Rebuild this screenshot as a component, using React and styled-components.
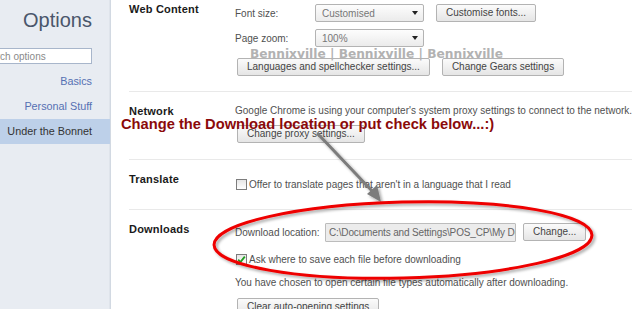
import React from "react";
import styled, { createGlobalStyle } from "styled-components";

const GlobalStyle = createGlobalStyle`
  html, body {
    margin: 0;
    padding: 0;
    width: 640px;
    height: 309px;
    overflow: hidden;
    background: #fff;
  }
  body {
    font-family: "Liberation Sans", Arial, sans-serif;
  }
  * { box-sizing: border-box; }
`;

const Page = styled.div`
  position: relative;
  display: flex;
  width: 640px;
  height: 309px;
  overflow: hidden;
  background: #fff;
`;

const Sidebar = styled.nav`
  flex: none;
  width: 111px;
  height: 100%;
  background: #e8ecf2;
  border-right: 1px solid #d2d9e2;
  box-shadow: inset -1px 0 0 #dfe4eb;
  display: flex;
  flex-direction: column;
  align-items: flex-end;
  overflow: hidden;
  padding-top: 8px;
`;

const Title = styled.h1`
  margin: 0 18px 0 0;
  font-size: 20px;
  line-height: 24px;
  font-weight: normal;
  color: #4a566b;
`;

const Search = styled.input`
  flex: none;
  margin: 16px 18px 0 0;
  width: 116px;
  height: 16px;
  border: 1px solid #a8b6cb;
  background: #fff;
  padding: 0 2px;
  font-family: "Liberation Sans", Arial, sans-serif;
  font-size: 10px;
  color: #555;
  outline: none;
  &::placeholder { color: #8a8a8a; }
`;

const NavList = styled.div`
  align-self: stretch;
  margin-top: 5px;
  display: flex;
  flex-direction: column;
`;

const NavItem = styled.div`
  height: 25px;
  line-height: 25px;
  text-align: right;
  padding-right: 18px;
  font-size: 10.8px;
  color: ${p => (p.$active ? "#333" : "#5570b3")};
  background: ${p => (p.$active ? "#bdd0e9" : "transparent")};
`;

const Main = styled.main`
  flex: 1;
  padding: 0 8px 0 18px;
  display: flex;
  flex-direction: column;
`;

const Section = styled.section`
  display: grid;
  grid-template-columns: 106px 1fr;
  padding: ${p => p.$top}px 0 ${p => p.$bottom}px;
  border-bottom: ${p => (p.$divider ? "1px solid #e9e9e9" : "none")};
`;

const Header = styled.h3`
  margin: 0;
  font-size: 11px;
  line-height: 14px;
  font-weight: bold;
  letter-spacing: 0.2px;
  color: #1a1a1a;
`;

const Content = styled.div`
  display: flex;
  flex-direction: column;
  gap: ${p => p.$gap || 7}px;
  padding-top: ${p => p.$pad || 0}px;
`;

const Row = styled.div`
  display: flex;
  align-items: center;
  gap: ${p => p.$gap || 0}px;
  height: ${p => p.$h || 18}px;
  margin-top: ${p => p.$mt || 0}px;
`;

const Label = styled.span`
  flex: none;
  width: ${p => p.$w}px;
  font-size: 10px;
  color: #505050;
  white-space: nowrap;
`;

const Text = styled.div`
  font-size: 10px;
  line-height: 14px;
  color: #505050;
  white-space: nowrap;
`;

const Select = styled.div`
  flex: none;
  width: 109px;
  height: 18px;
  border: 1px solid #b3b3b3;
  border-radius: 2px;
  background: linear-gradient(#fdfdfd, #ebebeb);
  padding: 0 5px 0 6px;
  display: flex;
  align-items: center;
  justify-content: space-between;
  font-size: 10px;
  color: #777;
`;

const Caret = styled.span`
  width: 0;
  height: 0;
  border-left: 3.5px solid transparent;
  border-right: 3.5px solid transparent;
  border-top: 4px solid #222;
`;

const Button = styled.button`
  flex: none;
  height: 18px;
  margin: 0 0 0 2px;
  padding: 0 9px;
  border: 1px solid #b3b3b3;
  border-radius: 2px;
  background: linear-gradient(#fbfbfb, #e5e5e5);
  font-family: "Liberation Sans", Arial, sans-serif;
  font-size: 10px;
  line-height: 16px;
  color: #444;
  white-space: nowrap;
`;

const PathField = styled.div`
  flex: none;
  width: 191px;
  height: 19px;
  border: 1px solid #bcbcbc;
  border-radius: 1px;
  background: #ececec;
  padding: 0 3px;
  font-size: 10px;
  letter-spacing: -0.15px;
  line-height: 17px;
  color: #666;
  white-space: nowrap;
  overflow: hidden;
`;

const CheckRow = styled.label`
  display: flex;
  align-items: center;
  height: 18px;
  margin-top: ${p => p.$mt || 0}px;
  font-size: 10px;
  color: #505050;
  white-space: nowrap;
`;

const Box = styled.span`
  flex: none;
  width: 11px;
  height: 11px;
  margin: 0 2px 0 1px;
  border: 1px solid #7d7d7d;
  background: linear-gradient(#e6e6e6, #ffffff);
  display: flex;
  align-items: center;
  justify-content: center;
`;

const Overlay = styled.svg`
  position: absolute;
  left: 0;
  top: 0;
  width: 640px;
  height: 309px;
  pointer-events: none;
`;

const Caption = styled.div`
  position: absolute;
  left: 121px;
  top: 117px;
  font-family: "Liberation Sans", Arial, sans-serif;
  font-weight: bold;
  font-size: 14.7px;
  line-height: 15px;
  color: #8b0a0a;
  white-space: nowrap;
  pointer-events: none;
`;

const Watermark = styled.div`
  position: absolute;
  left: 250px;
  top: 47px;
  font-family: "DejaVu Sans", Verdana, sans-serif;
  font-weight: bold;
  font-size: 12.2px;
  line-height: 14px;
  color: #b2b2b2;
  white-space: nowrap;
  pointer-events: none;
`;

function Checkbox({ checked }) {
  return (
    <Box>
      {checked && (
        <svg width="9" height="9" viewBox="0 0 9 9">
          <path d="M1.2 4.6 L3.4 7 L7.8 1.6" fill="none" stroke="#1f9e1f" strokeWidth="1.8" />
        </svg>
      )}
    </Box>
  );
}

export default function App() {
  return (
    <Page>
      <GlobalStyle />
      <Sidebar>
        <Title>Options</Title>
        <Search placeholder="Search options" readOnly />
        <NavList>
          <NavItem>Basics</NavItem>
          <NavItem>Personal Stuff</NavItem>
          <NavItem $active>Under the Bonnet</NavItem>
        </NavList>
      </Sidebar>
      <Main>
        <Section $top={2} $bottom={15} $divider>
          <Header>Web Content</Header>
          <Content $pad={2}>
            <Row $gap={10}>
              <Label $w={70}>Font size:</Label>
              <Select>Customised<Caret /></Select>
              <Button>Customise fonts...</Button>
            </Row>
            <Row $gap={10}>
              <Label $w={70}>Page zoom:</Label>
              <Select>100%<Caret /></Select>
            </Row>
            <Row $gap={10} $mt={4}>
              <Button>Languages and spellchecker settings...</Button>
              <Button>Change Gears settings</Button>
            </Row>
          </Content>
        </Section>
        <Section $top={12} $bottom={16} $divider>
          <Header>Network</Header>
          <Content>
            <Text>Google Chrome is using your computer's system proxy settings to connect to the network.</Text>
            <Row>
              <Button>Change proxy settings...</Button>
            </Row>
          </Content>
        </Section>
        <Section $top={12} $bottom={16} $divider>
          <Header>Translate</Header>
          <Content>
            <CheckRow $mt={3}>
              <Checkbox />
              Offer to translate pages that aren't in a language that I read
            </CheckRow>
          </Content>
        </Section>
        <Section $top={12} $bottom={16}>
          <Header>Downloads</Header>
          <Content $gap={8}>
            <Row $h={20} $gap={5}>
              <Label $w={85}>Download location:</Label>
              <PathField>C:\Documents and Settings\POS_CP\My Documents\Downloads</PathField>
              <Button>Change...</Button>
            </Row>
            <CheckRow>
              <Checkbox checked />
              Ask where to save each file before downloading
            </CheckRow>
            <Text>You have chosen to open certain file types automatically after downloading.</Text>
            <Row>
              <Button>Clear auto-opening settings</Button>
            </Row>
          </Content>
        </Section>
      </Main>

      <Watermark>Bennixville | Bennixville | Bennixville</Watermark>
      <Caption>Change the Download location or put check below...:)</Caption>

      <Overlay viewBox="0 0 640 309">
        <defs>
          <filter id="shadow" x="-10%" y="-30%" width="120%" height="160%">
            <feGaussianBlur in="SourceAlpha" stdDeviation="1.4" />
            <feOffset dx="2" dy="2" result="blur" />
            <feComponentTransfer>
              <feFuncA type="linear" slope="0.35" />
            </feComponentTransfer>
            <feMerge>
              <feMergeNode />
              <feMergeNode in="SourceGraphic" />
            </feMerge>
          </filter>
        </defs>
        <g filter="url(#shadow)">
          <line x1="318" y1="134" x2="374" y2="193" stroke="#7c7c7c" strokeWidth="3" strokeLinecap="round" />
          <polygon points="381,202 367,194 377,185" fill="#7c7c7c" />
        </g>
        <g filter="url(#shadow)">
          <ellipse
            cx="403"
            cy="240"
            rx="189"
            ry="38"
            fill="none"
            stroke="#ee0000"
            strokeWidth="3"
            transform="rotate(-1.5 403 240)"
          />
        </g>
      </Overlay>
    </Page>
  );
}
